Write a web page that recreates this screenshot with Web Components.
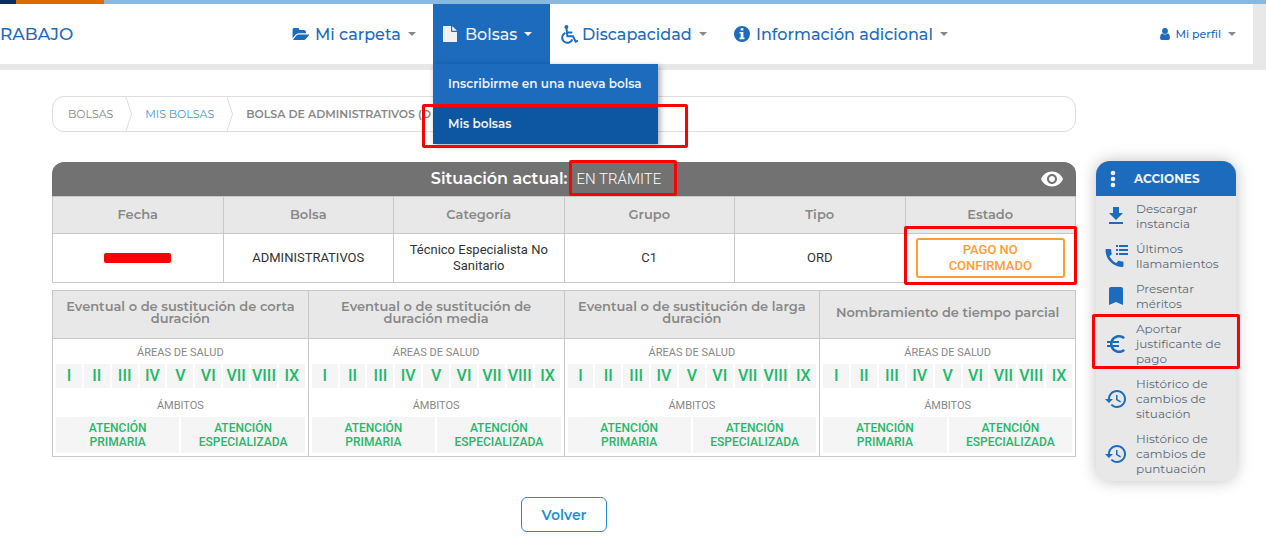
<!DOCTYPE html>
<html lang="es">
<head>
<meta charset="utf-8">
<title>Mis bolsas</title>
<style>
body { margin: 0; background: #fff; font-family: Montserrat, Inter, sans-serif; color: #333; }
</style>
</head>
<body>
<bolsa-page></bolsa-page>
<script>
const define = (name, html) => customElements.define(name, class extends HTMLElement {
  connectedCallback() {
    if (this.shadowRoot) return;
    const root = this.attachShadow({ mode: "open" });
    const t = document.createElement("template");
    t.innerHTML = typeof html === "function" ? html(this) : html;
    root.append(t.content.cloneNode(true));
  }
});

const ICONS = {
  folder: ["0 200 1944 1400", '<path d="M1943 952q0 31-31 66l-336 396q-43 51-120.5 86.500t-143.500 35.500h-1088q-34 0-60.500-13t-26.500-43q0-31 31-66l336-396q43-51 120.500-86.500t143.500-35.500h1088q34 0 60.500 13t26.500 43zm-343-344v160h-832q-94 0-197 47.500t-164 119.500l-337 396-5 6q0-4-.5-12.500t-.5-12.500v-960q0-92 66-158t158-66h320q92 0 158 66t66 158v32h544q92 0 158 66t66 158z"/>'],
  file: ["0 0 14 16", '<path d="M0 .5Q0 0 .5 0H8v5q0 1 1 1h5v9.500q0 .5-.5.5H.5Q0 16 0 15.500zM9.200 0 14 4.800H9.200z"/>'],
  wheelchair: ["0 0 18 19", '<circle cx="6.400" cy="2.100" r="2"/><g fill="none" stroke="currentColor" stroke-width="2"><path d="M6.500 3.500 7.400 11.300H13L15.700 16.700 18 15.600M7 7.500H12.300"/><path d="M5.400 7.800A5.200 5.200 0 1 0 12.300 14.300"/></g>'],
  info: ["0 0 16 16", '<path fill-rule="evenodd" d="M8 0a8 8 0 1 1 0 16A8 8 0 0 1 8 0zM6.600 2.200v2.300h2.800V2.200zM5.500 5.900v1.700h1.200v3.900H5.500v1.700h5v-1.700H9.400V5.900z"/>'],
  user: ["0 0 10 12", '<circle cx="5" cy="3" r="2.900"/><path d="M2 5.200Q5 7.600 8 5.200 10 6.200 10 9.800 10 12 8.200 12H1.800Q0 12 0 9.800 0 6.200 2 5.200z"/>'],
  caret: ["0 0 8 4", '<path d="M0 0h8L4 4z"/>'],
  eye: ["0 0 24 24", '<path d="M12 4.500C7 4.500 2.730 7.610 1 12c1.730 4.390 6 7.500 11 7.500s9.270-3.110 11-7.500c-1.730-4.390-6-7.500-11-7.500zM12 17c-2.760 0-5-2.240-5-5s2.240-5 5-5 5 2.240 5 5-2.240 5-5 5zm0-8c-1.660 0-3 1.340-3 3s1.340 3 3 3 3-1.340 3-3-1.340-3-3-3z"/>'],
  dots: ["0 0 6 18", '<circle cx="3" cy="3" r="2.300"/><circle cx="3" cy="9" r="2.300"/><circle cx="3" cy="15" r="2.300"/>'],
  download: ["0 0 24 24", '<path d="M19 9h-4V3H9v6H5l7 7 7-7zM5 18v2h14v-2H5z"/>'],
  phone: ["0 0 24 24", '<path d="M18.500 17.400c-1.200 0-2.400-.2-3.500-.6-.4-.1-.7 0-1 .3l-1.600 2C9.500 17.700 7 15.100 5.500 12.200l2-1.700c.3-.2.4-.6.2-1-.3-1.100-.5-2.300-.5-3.500 0-.6-.5-1-1-1H2.700C2.100 5 1.500 5.200 1.500 6c0 9.300 7.700 17 17 17 .7 0 1-.6 1-1.200v-3.400c0-.6-.5-1-1-1z"/><path d="M12 1h2v2h-2zM12 5h2v2h-2zM12 9h2v2h-2zM15 1h9v2h-9zM15 5h9v2h-9zM15 9h9v2h-9z"/>'],
  bookmark: ["0 0 24 24", '<path d="M17 3H7c-1.100 0-1.990.9-1.990 2L5 21l7-3 7 3V5c0-1.100-.9-2-2-2z"/>'],
  euro: ["0 0 24 24", '<path d="M15 18.500c-2.510 0-4.680-1.420-5.760-3.500H15v-2H8.580c-.05-.33-.08-.66-.08-1s.03-.67.08-1H15V9H9.240C10.320 6.920 12.500 5.500 15 5.500c1.610 0 3.090.59 4.230 1.570L21 5.300C19.410 3.870 17.300 3 15 3c-3.920 0-7.240 2.510-8.480 6H3v2h3.060c-.04.33-.06.66-.06 1s.02.67.06 1H3v2h3.520c1.240 3.490 4.560 6 8.480 6 2.310 0 4.410-.87 6-2.300l-1.780-1.770c-1.130.98-2.600 1.570-4.220 1.570z"/>'],
  history: ["0 0 24 24", '<path d="M13 3c-4.970 0-9 4.030-9 9H1l3.890 3.890.07.14L9 12H6c0-3.870 3.130-7 7-7s7 3.130 7 7-3.130 7-7 7c-1.930 0-3.680-.79-4.940-2.060l-1.420 1.420C8.270 19.990 10.510 21 13 21c4.970 0 9-4.030 9-9s-4.030-9-9-9zm-1 5v5l4.280 2.540.72-1.210-3.500-2.080V8H12z"/>']
};

define("ui-icon", el => {
  const [box, body] = ICONS[el.getAttribute("name")];
  return `<style>:host{display:block;flex:none}svg{display:block;width:100%;height:100%;fill:currentColor}</style>
  <svg viewBox="${box}" aria-hidden="true">${body}</svg>`;
});

/* Red highlight frame laid over its positioned parent. */
define("red-mark", `<style>
:host{display:block;position:absolute;box-sizing:border-box;border:3px solid #f00;border-radius:2px;pointer-events:none;z-index:5}
</style>`);

define("nav-item", el => `<style>
:host{display:block;position:relative;color:#1c6bbd}
a{display:flex;align-items:center;height:60px;padding-left:10px;box-sizing:border-box;color:inherit;text-decoration:none;font-size:16px;font-weight:500;white-space:nowrap}
.icon{width:var(--icon-w,17px);height:var(--icon-h,17px);margin-right:var(--icon-gap,6px)}
.caret{width:8px;height:4px;margin-left:7px;color:#888}
:host([active]){background:#1c6bbd;color:#f1f1f1}
:host([active]) .caret{color:#f1f1f1}
:host([small]) a{font-size:11px;padding:0}
</style>
<a href="#"><ui-icon class="icon" name="${el.getAttribute("icon")}"></ui-icon><slot></slot><ui-icon class="caret" name="caret"></ui-icon></a>
<slot name="menu"></slot>`);

define("nav-menu", `<style>
:host{display:block;position:absolute;left:0;top:60px;width:225px;background:#1c6bbd;box-shadow:2px 2px 6px rgba(0,0,0,.35);z-index:4}
a{display:block;position:relative;line-height:40px;padding:0 15px;color:#f1f1f1;text-decoration:none;font-size:12px;font-weight:600;white-space:nowrap}
.on{background:#0d57a2}
red-mark{left:-11px;right:-30px;top:0;bottom:-4px}
</style>
<a href="#">Inscribirme en una nueva bolsa</a>
<a href="#" class="on">Mis bolsas<red-mark></red-mark></a>`);

define("site-header", `<style>
:host{display:block;background:#e8e8e8;padding-bottom:6px}
.stripe{height:4px;background:linear-gradient(90deg,#0a2f66 0 16px,#dd6b00 16px 104px,#88b9de 104px)}
.bar{display:flex;align-items:center;height:60px;margin:0 13px 0 0;background:#fff}
.brand{flex:0 0 282px;overflow:hidden;color:#1c6bbd;font-size:17px;font-weight:500}
nav{display:flex}
.carpeta{width:151px}.bolsas{width:117px}.disc{width:174px}.info{width:242px}
.perfil{margin-left:auto;margin-right:17px}
</style>
<div class="stripe"></div>
<div class="bar">
<div class="brand">RABAJO</div>
<nav>
<nav-item class="carpeta" icon="folder" style="--icon-h:13px">Mi carpeta</nav-item>
<nav-item class="bolsas" icon="file" active style="--icon-w:14px;--icon-h:16px;--icon-gap:8px">Bolsas<nav-menu slot="menu"></nav-menu></nav-item>
<nav-item class="disc" icon="wheelchair" style="--icon-w:18px;--icon-h:19px;--icon-gap:4px">Discapacidad</nav-item>
<nav-item class="info" icon="info" style="--icon-w:16px;--icon-h:16px">Información adicional</nav-item>
</nav>
<nav-item class="perfil" icon="user" small style="--icon-w:10px;--icon-h:12px">Mi perfil</nav-item>
</div>`);

define("bread-crumb", `<style>
:host{display:flex;height:34px;border:1px solid #ddd;border-radius:12px;font-size:11px;color:#888}
span,a{display:flex;align-items:center;color:inherit;text-decoration:none;white-space:nowrap}
span{padding-left:15px}
a{color:#4a97d6}
b{font-weight:600;display:flex;align-items:center;white-space:nowrap}
svg{width:8px;height:34px;margin:0 12px;fill:none;stroke:#ddd}
</style>
<span>BOLSAS</span><svg viewBox="0 0 8 34"><path d="M1 0 6.500 17 1 34"/></svg>
<a href="#">MIS BOLSAS</a><svg viewBox="0 0 8 34"><path d="M1 0 6.500 17 1 34"/></svg>
<b>BOLSA DE ADMINISTRATIVOS (O</b>`);

const TABLE = `
table{width:100%;border-collapse:collapse;table-layout:fixed;font-family:Roboto,sans-serif}
th,td{border:1px solid #c8c8c8;text-align:center;box-sizing:border-box}
th{background:#e8e8e8;color:#888;font:600 13px/12px Montserrat,Inter,sans-serif}`;

define("status-table", `<style>
:host{display:block}${TABLE}
header{display:flex;align-items:center;height:34px;background:#727272;color:#fff;border-radius:12px 12px 0 0}
h2{flex:1;display:flex;justify-content:center;align-items:center;margin:0;font-size:16px;font-weight:600;line-height:20px;white-space:nowrap}
.state{position:relative;margin-left:9px;font:300 15px/20px Roboto,sans-serif}
.state red-mark{left:-8px;right:-16px;top:-9px;bottom:-7px}
button{border:0;padding:0;margin-right:12px;background:none;color:#fff}
button ui-icon{width:24px;height:24px}
th{height:37px;padding:0 0 2px}
td{height:49px;padding:0 10px;font-size:13px;line-height:16px;color:#333;position:relative}
td red-mark{left:-2px;right:-2px;top:-8px;bottom:-3px}
.hidden{display:block;width:67px;height:10px;margin:0 auto;border-radius:2px;background:#f00}
.pay{display:block;border:2px solid #ff9d33;border-radius:3px;padding:2px 0;color:#ff9d33;font-weight:500}
</style>
<header><h2>Situación actual:<span class="state">EN TRÁMITE<red-mark></red-mark></span></h2>
<button type="button" aria-label="Ver"><ui-icon name="eye"></ui-icon></button></header>
<table><thead><tr><th>Fecha</th><th>Bolsa</th><th>Categoría</th><th>Grupo</th><th>Tipo</th><th>Estado</th></tr></thead>
<tbody><tr><td><span class="hidden"></span></td><td>ADMINISTRATIVOS</td><td>Técnico Especialista No Sanitario</td><td>C1</td><td>ORD</td>
<td><span class="pay">PAGO NO<br>CONFIRMADO</span><red-mark></red-mark></td></tr></tbody></table>`);

define("area-panel", `<style>
:host{display:block;padding:6px 3px 3px;color:#888;font-size:11px;line-height:16px}
p{margin:0 0 3px}
p.second{margin:10px 0 3px}
div{display:grid;gap:2px}
.areas{grid-template-columns:repeat(9,1fr)}
.scopes{grid-template-columns:1fr 1fr}
span{background:#f5f5f5;color:#1fb96b;font-weight:500;min-width:0}
.areas span{font-size:16px;line-height:24px}
.scopes span{font-size:12px;line-height:14px;padding:4px 0}
</style>
<p>ÁREAS DE SALUD</p>
<div class="areas">${["I","II","III","IV","V","VI","VII","VIII","IX"].map(n => `<span>${n}</span>`).join("")}</div>
<p class="second">ÁMBITOS</p>
<div class="scopes"><span>ATENCIÓN<br>PRIMARIA</span><span>ATENCIÓN<br>ESPECIALIZADA</span></div>`);

define("areas-table", `<style>
:host{display:block}${TABLE}
th{height:48px;padding:0 8px 5px}
td{padding:0}
</style>
<table><thead><tr><th>Eventual o de sustitución de corta duración</th><th>Eventual o de sustitución de duración media</th><th>Eventual o de sustitución de larga duración</th><th>Nombramiento de tiempo parcial</th></tr></thead>
<tbody><tr>${"<td><area-panel></area-panel></td>".repeat(4)}</tr></tbody></table>`);

define("action-item", el => `<style>
:host{display:block;position:relative}
a{display:grid;grid-template-columns:24px 1fr;gap:8px;align-items:center;padding:5px 8px;color:#5b6876;text-decoration:none;font-size:12px;line-height:15px;font-weight:400}
ui-icon{width:24px;height:24px;color:#1c6bbd}
</style><a href="#"><ui-icon name="${el.getAttribute("icon")}"></ui-icon><span><slot></slot></span></a><slot name="mark"></slot>`);

define("actions-panel", `<style>
:host{display:block;background:#e8e8e8;border-radius:14px;box-shadow:0 0 16px rgba(0,0,0,.25)}
h2{display:flex;align-items:center;gap:18px;height:35px;margin:0;padding-left:14px;border-radius:14px 14px 0 0;background:#1c6bbd;color:#f1f1f1;font-size:12px;font-weight:700}
h2 ui-icon{width:6px;height:18px}
red-mark{left:-4px;right:-4px;top:-2px;bottom:2px}
</style>
<h2><ui-icon name="dots"></ui-icon>ACCIONES</h2>
<action-item icon="download">Descargar<br>instancia</action-item>
<action-item icon="phone">Últimos<br>llamamientos</action-item>
<action-item icon="bookmark">Presentar<br>méritos</action-item>
<action-item icon="euro">Aportar<br>justificante de<br>pago<red-mark slot="mark"></red-mark></action-item>
<action-item icon="history">Histórico de<br>cambios de<br>situación</action-item>
<action-item icon="history">Histórico de<br>cambios de<br>puntuación</action-item>`);

define("back-button", `<style>
:host{display:flex;justify-content:center}
button{height:35px;padding:0 20px;border:1px solid #1c8fd4;border-radius:6px;background:#fff;color:#1c8fd4;font:600 14px Montserrat,Inter,sans-serif}
</style><button type="button"><slot></slot></button>`);

define("bolsa-page", `<style>
:host{display:block}
main{display:grid;grid-template-columns:minmax(0,1fr) 140px;column-gap:20px;padding:26px 30px 17px 52px}
bread-crumb{grid-column:1}
status-table{margin-top:30px}
areas-table{margin-top:7px}
back-button{margin-top:40px}
.content{grid-column:1}
actions-panel{grid-column:2;grid-row:2;align-self:start;margin-top:29px}
</style>
<site-header></site-header>
<main><bread-crumb></bread-crumb>
<section class="content"><status-table></status-table><areas-table></areas-table><back-button>Volver</back-button></section>
<actions-panel></actions-panel></main>`);
</script>
</body>
</html>
